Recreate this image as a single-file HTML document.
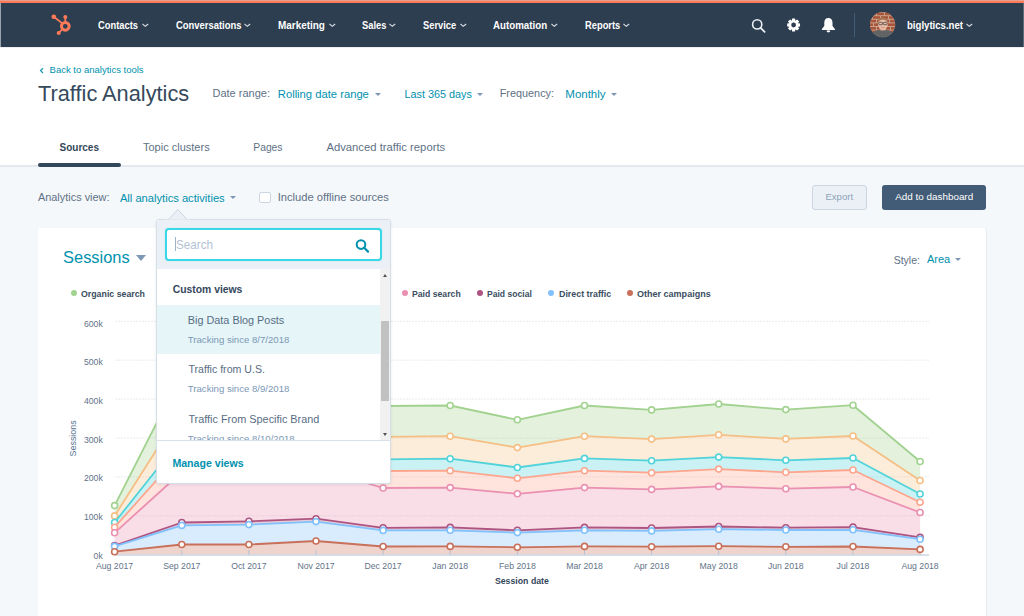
<!DOCTYPE html><html><head><meta charset="utf-8"><style>
*{margin:0;padding:0;box-sizing:border-box}
html,body{width:1024px;height:616px;overflow:hidden;background:#f5f8fa;font-family:"Liberation Sans",sans-serif}
.t{position:absolute;line-height:1;white-space:nowrap}
.abs{position:absolute}

</style></head><body>
<div class="abs" style="left:0;top:0;width:1024px;height:166px;background:#fff"></div>
<div class="abs" style="left:0;top:165px;width:1024px;height:2px;background:#e3e9ef"></div>
<div class="abs" style="left:0;top:47px;width:1024px;height:1px;background:#eceef0"></div>
<div class="abs" style="left:0;top:0;width:1024px;height:47px;background:#2d3e50"></div>
<div class="abs" style="left:0;top:0;width:1024px;height:3px;background:#ff7a59"></div>
<div class="abs" style="left:0;top:0;width:1024px;height:1px;background:#e2a08e"></div>
<div class="abs" style="left:0;top:3px;width:1px;height:44px;background:#9aa4ae"></div>
<div class="abs" style="left:1023px;top:3px;width:1px;height:44px;background:#5d6b78"></div>
<svg class="abs" style="left:48px;top:10px" width="30" height="30" viewBox="0 0 30 30">
<g fill="none" stroke="#ff7a59" stroke-linecap="round">
<circle cx="17.3" cy="16.3" r="3.85" stroke-width="3"/>
<line x1="5.8" y1="6.8" x2="14.3" y2="13.4" stroke-width="1.8"/>
<line x1="17.3" y1="7" x2="17.3" y2="12.4" stroke-width="1.8"/>
<line x1="10.7" y1="22.9" x2="14.5" y2="19.2" stroke-width="1.8"/>
</g>
<circle cx="5.8" cy="6.8" r="2.3" fill="#ff7a59"/><circle cx="17.3" cy="7" r="2" fill="#ff7a59"/><circle cx="10.7" cy="22.9" r="2" fill="#ff7a59"/>
</svg>
<div class="t" style="left:98px;top:20.73px;font-size:10px;font-weight:700;color:#fff;transform:scaleX(0.9346);transform-origin:0 0">Contacts</div>
<svg style="position:absolute;left:141.5px;top:23.0px" width="7" height="5"><polyline points="0.5,1 3.3,3.3 6.2,1" fill="none" stroke="#d5dbe2" stroke-width="1.1"/></svg>
<div class="t" style="left:175.5px;top:20.73px;font-size:10px;font-weight:700;color:#fff;transform:scaleX(0.9429);transform-origin:0 0">Conversations</div>
<svg style="position:absolute;left:244.39999999999998px;top:23.0px" width="7" height="5"><polyline points="0.5,1 3.3,3.3 6.2,1" fill="none" stroke="#d5dbe2" stroke-width="1.1"/></svg>
<div class="t" style="left:277.8px;top:20.73px;font-size:10px;font-weight:700;color:#fff;transform:scaleX(0.9929);transform-origin:0 0">Marketing</div>
<svg style="position:absolute;left:328.8px;top:23.0px" width="7" height="5"><polyline points="0.5,1 3.3,3.3 6.2,1" fill="none" stroke="#d5dbe2" stroke-width="1.1"/></svg>
<div class="t" style="left:361.8px;top:20.73px;font-size:10px;font-weight:700;color:#fff;transform:scaleX(0.9334);transform-origin:0 0">Sales</div>
<svg style="position:absolute;left:388.7px;top:23.0px" width="7" height="5"><polyline points="0.5,1 3.3,3.3 6.2,1" fill="none" stroke="#d5dbe2" stroke-width="1.1"/></svg>
<div class="t" style="left:422.9px;top:20.73px;font-size:10px;font-weight:700;color:#fff;transform:scaleX(0.9327);transform-origin:0 0">Service</div>
<svg style="position:absolute;left:459.59999999999997px;top:23.0px" width="7" height="5"><polyline points="0.5,1 3.3,3.3 6.2,1" fill="none" stroke="#d5dbe2" stroke-width="1.1"/></svg>
<div class="t" style="left:493.3px;top:20.73px;font-size:10px;font-weight:700;color:#fff;transform:scaleX(0.9740);transform-origin:0 0">Automation</div>
<svg style="position:absolute;left:551.1px;top:23.0px" width="7" height="5"><polyline points="0.5,1 3.3,3.3 6.2,1" fill="none" stroke="#d5dbe2" stroke-width="1.1"/></svg>
<div class="t" style="left:584.9px;top:20.73px;font-size:10px;font-weight:700;color:#fff;transform:scaleX(0.9339);transform-origin:0 0">Reports</div>
<svg style="position:absolute;left:623.3000000000001px;top:23.0px" width="7" height="5"><polyline points="0.5,1 3.3,3.3 6.2,1" fill="none" stroke="#d5dbe2" stroke-width="1.1"/></svg>
<svg class="abs" style="left:745px;top:12px" width="100" height="26" viewBox="745 12 100 26">
<circle cx="757.2" cy="24.4" r="4.6" fill="none" stroke="#eaf0f6" stroke-width="1.6"/>
<line x1="760.6" y1="27.8" x2="764.6" y2="31.8" stroke="#eaf0f6" stroke-width="1.8" stroke-linecap="round"/>
<g transform="translate(793.6,25)" fill="#fff"><path d="M-1.88,-4.53 L-1.68,-4.60 L-1.48,-6.43 L1.48,-6.43 L1.68,-4.60 L1.88,-4.53 L2.07,-4.44 L3.50,-5.60 L5.60,-3.50 L4.44,-2.07 L4.53,-1.88 L4.60,-1.68 L6.43,-1.48 L6.43,1.48 L4.60,1.68 L4.53,1.88 L4.44,2.07 L5.60,3.50 L3.50,5.60 L2.07,4.44 L1.88,4.53 L1.68,4.60 L1.48,6.43 L-1.48,6.43 L-1.68,4.60 L-1.88,4.53 L-2.07,4.44 L-3.50,5.60 L-5.60,3.50 L-4.44,2.07 L-4.53,1.88 L-4.60,1.68 L-6.43,1.48 L-6.43,-1.48 L-4.60,-1.68 L-4.53,-1.88 L-4.44,-2.07 L-5.60,-3.50 L-3.50,-5.60 L-2.07,-4.44 Z M2.4,0 A2.4,2.4 0 1,0 -2.4,0 A2.4,2.4 0 1,0 2.4,0 Z" fill-rule="evenodd"/></g>
<path d="M828.4,17.9 c-2.6,0 -4.1,1.9 -4.1,4.6 v3.5 l-2.4,3.1 v0.8 h13 v-0.8 l-2.4,-3.1 v-3.5 c0,-2.7 -1.5,-4.6 -4.1,-4.6 z" fill="#fff"/>
<ellipse cx="828.4" cy="31.3" rx="1.8" ry="1.1" fill="#fff"/>
</svg>
<div class="abs" style="left:854px;top:13px;width:1px;height:24px;background:#425b76"></div>
<svg class="abs" style="left:870px;top:12px" width="26" height="26" viewBox="0 0 26 26">
<defs><clipPath id="av"><circle cx="12.6" cy="12.6" r="12.6"/></clipPath></defs>
<g clip-path="url(#av)">
<rect width="26" height="26" fill="#c9a28c"/>
<g fill="#a8543a"><rect x="0" y="0.6" width="6" height="2.6"/><rect x="7" y="0.6" width="7" height="2.6"/><rect x="15" y="0.6" width="7" height="2.6"/><rect x="23" y="0.6" width="3" height="2.6"/>
<rect x="3" y="4.2" width="7" height="2.6"/><rect x="11" y="4.2" width="7" height="2.6"/><rect x="19" y="4.2" width="7" height="2.6"/>
<rect x="0" y="7.8" width="6" height="2.6"/><rect x="7" y="7.8" width="5" height="2.6"/><rect x="16" y="7.8" width="3" height="2.6"/><rect x="20" y="7.8" width="6" height="2.6"/>
<rect x="0" y="11.4" width="3" height="2.6"/><rect x="4" y="11.4" width="6" height="2.6"/><rect x="17" y="11.4" width="9" height="2.6"/>
<rect x="0" y="15" width="6" height="2.6"/><rect x="7" y="15" width="4" height="2.6"/><rect x="16" y="15" width="4" height="2.6"/><rect x="21" y="15" width="5" height="2.6"/>
<rect x="2" y="18.6" width="6" height="2.6"/><rect x="19" y="18.6" width="7" height="2.6"/></g>
<path d="M0,26 q2,-7.5 8.5,-8 h8.5 q6,0.5 9,8z" fill="#616365"/>
<rect x="10.4" y="15.5" width="5" height="3" fill="#dba48f"/>
<ellipse cx="12.9" cy="12.2" rx="4.9" ry="5.7" fill="#e9bba6"/>
<path d="M8,10.2 q0.2,-4.8 4.9,-5 q4.7,0.2 4.9,5 q-1.6,-2.6 -4.9,-2.6 q-3.3,0 -4.9,2.6z" fill="#a47650"/>
<rect x="8.7" y="10.3" width="3.8" height="2.4" rx="0.8" fill="none" stroke="#3a3a3a" stroke-width="0.7"/>
<rect x="13.3" y="10.3" width="3.8" height="2.4" rx="0.8" fill="none" stroke="#3a3a3a" stroke-width="0.7"/>
<path d="M11,15.2 q1.9,1 3.8,0" fill="none" stroke="#b07a6a" stroke-width="0.5"/>
</g></svg>
<div class="t" style="left:907px;top:20.73px;font-size:10px;font-weight:700;color:#fff;transform:scaleX(0.9596);transform-origin:0 0">biglytics.net</div>
<svg style="position:absolute;left:966.2px;top:23.0px" width="7" height="5"><polyline points="0.5,1 3.3,3.3 6.2,1" fill="none" stroke="#d5dbe2" stroke-width="1.1"/></svg>
<svg class="abs" style="left:39px;top:67px" width="6" height="8"><polyline points="3.9,1.2 1.6,3.6 3.9,6" fill="none" stroke="#1c9ab5" stroke-width="1.3"/></svg>
<div class="t" style="left:49.6px;top:64.86px;font-size:9.5px;font-weight:400;color:#0091ae;">Back to analytics tools</div>
<div class="t" style="left:38.3px;top:82.84px;font-size:22.4px;font-weight:400;color:#36495d;transform:scaleX(0.9721);transform-origin:0 0">Traffic Analytics</div>
<div class="t" style="left:212.5px;top:87.89px;font-size:11px;font-weight:400;color:#5e7186;">Date range:</div>
<div class="t" style="left:277.8px;top:88.79px;font-size:11.23px;font-weight:400;color:#0091ae;">Rolling date range</div>
<div style="position:absolute;left:374.7px;top:92.8px;width:0;height:0;border-left:3.0px solid transparent;border-right:3.0px solid transparent;border-top:3.5px solid #7c98b6"></div>
<div class="t" style="left:404.5px;top:89.13px;font-size:10.83px;font-weight:400;color:#0091ae;">Last 365 days</div>
<div style="position:absolute;left:477px;top:92.8px;width:0;height:0;border-left:3.0px solid transparent;border-right:3.0px solid transparent;border-top:3.5px solid #7c98b6"></div>
<div class="t" style="left:499.7px;top:88.01px;font-size:10.86px;font-weight:400;color:#5e7186;">Frequency:</div>
<div class="t" style="left:565.3px;top:88.67px;font-size:11.5px;font-weight:400;color:#0091ae;">Monthly</div>
<div style="position:absolute;left:611.2px;top:92.8px;width:0;height:0;border-left:3.0px solid transparent;border-right:3.0px solid transparent;border-top:3.5px solid #7c98b6"></div>
<div class="t" style="left:59.5px;top:142.53px;font-size:10px;font-weight:700;color:#33475b;">Sources</div>
<div class="t" style="left:143px;top:141.69px;font-size:11px;font-weight:400;color:#5e7186;">Topic clusters</div>
<div class="t" style="left:253.3px;top:142.88px;font-size:10.3px;font-weight:400;color:#5e7186;">Pages</div>
<div class="t" style="left:326.4px;top:142.06px;font-size:11.27px;font-weight:400;color:#5e7186;">Advanced traffic reports</div>
<div class="abs" style="left:38px;top:163px;width:83px;height:4px;border-radius:2px;background:#33475b"></div>
<div class="t" style="left:37.9px;top:192.05px;font-size:10.93px;font-weight:400;color:#5e7186;">Analytics view:</div>
<div class="t" style="left:119.9px;top:192.55px;font-size:11.16px;font-weight:400;color:#0091ae;">All analytics activities</div>
<div style="position:absolute;left:229.5px;top:195.6px;width:0;height:0;border-left:3.1px solid transparent;border-right:3.1px solid transparent;border-top:3.6px solid #7c98b6"></div>
<div class="abs" style="left:259px;top:192px;width:12px;height:11px;border:1px solid #cbd6e2;border-radius:2px;background:#fff"></div>
<div class="t" style="left:277.7px;top:191.82px;font-size:11.2px;font-weight:400;color:#5e7186;">Include offline sources</div>
<div class="abs" style="left:812px;top:185px;width:55px;height:25px;border:1px solid #cbd6e2;border-radius:3px;background:#eaf0f6"></div>
<div class="t" style="left:825.4px;top:192.37px;font-size:9.6px;font-weight:400;color:#8fa3b9;">Export</div>
<div class="abs" style="left:882px;top:185px;width:104px;height:25px;border-radius:3px;background:#425b76"></div>
<div class="t" style="left:895.3px;top:192.15px;font-size:9.87px;font-weight:400;color:#fff;">Add to dashboard</div>
<div class="abs" style="left:38px;top:228px;width:948px;height:400px;background:#fff;border-radius:3px;box-shadow:1px 0 0 #e8ecf0"></div>
<div class="t" style="left:63.1px;top:249.12px;font-size:16.4px;font-weight:400;color:#0091ae;">Sessions</div>
<div style="position:absolute;left:135.5px;top:255px;width:0;height:0;border-left:5.0px solid transparent;border-right:5.0px solid transparent;border-top:6px solid #7c98b6"></div>
<div class="t" style="left:893.7px;top:254.71px;font-size:10.5px;font-weight:400;color:#5e7186;">Style:</div>
<div class="t" style="left:926.9px;top:254.29px;font-size:11px;font-weight:400;color:#0091ae;">Area</div>
<div style="position:absolute;left:955px;top:258px;width:0;height:0;border-left:3.0px solid transparent;border-right:3.0px solid transparent;border-top:3px solid #7c98b6"></div>
<div class="abs" style="left:70.8px;top:290.2px;width:6px;height:6px;border-radius:50%;background:#a2d28f"></div>
<div class="t" style="left:81.3px;top:289.71px;font-size:9.2px;font-weight:700;color:#3a4d61;transform:scaleX(0.9566);transform-origin:0 0">Organic search</div>
<div class="abs" style="left:402px;top:290.2px;width:6px;height:6px;border-radius:50%;background:#ea90b1"></div>
<div class="t" style="left:412.4px;top:289.71px;font-size:9.2px;font-weight:700;color:#3a4d61;transform:scaleX(0.9439);transform-origin:0 0">Paid search</div>
<div class="abs" style="left:476.6px;top:290.2px;width:6px;height:6px;border-radius:50%;background:#ad5580"></div>
<div class="t" style="left:487.2px;top:289.71px;font-size:9.2px;font-weight:700;color:#3a4d61;transform:scaleX(0.9330);transform-origin:0 0">Paid social</div>
<div class="abs" style="left:547.9px;top:290.2px;width:6px;height:6px;border-radius:50%;background:#81c1fd"></div>
<div class="t" style="left:558.5px;top:289.71px;font-size:9.2px;font-weight:700;color:#3a4d61;transform:scaleX(0.9644);transform-origin:0 0">Direct traffic</div>
<div class="abs" style="left:626.6px;top:290.2px;width:6px;height:6px;border-radius:50%;background:#c8705a"></div>
<div class="t" style="left:637.2px;top:289.71px;font-size:9.2px;font-weight:700;color:#3a4d61;transform:scaleX(0.9818);transform-origin:0 0">Other campaigns</div>
<svg width="1024" height="616" style="position:absolute;left:0;top:0">
<line x1="115" y1="515.8" x2="929" y2="515.8" stroke="#e8ecf1" stroke-width="1" stroke-dasharray="2,1"/>
<line x1="115" y1="476.9" x2="929" y2="476.9" stroke="#e8ecf1" stroke-width="1" stroke-dasharray="2,1"/>
<line x1="115" y1="438.0" x2="929" y2="438.0" stroke="#e8ecf1" stroke-width="1" stroke-dasharray="2,1"/>
<line x1="115" y1="399.1" x2="929" y2="399.1" stroke="#e8ecf1" stroke-width="1" stroke-dasharray="2,1"/>
<line x1="115" y1="360.2" x2="929" y2="360.2" stroke="#e8ecf1" stroke-width="1" stroke-dasharray="2,1"/>
<line x1="115" y1="321.3" x2="929" y2="321.3" stroke="#e8ecf1" stroke-width="1" stroke-dasharray="2,1"/>
<polygon points="114.6,551.7 181.8,544.5 248.9,544.5 316.0,541.0 383.1,546.5 450.2,546.4 517.4,547.3 584.5,546.4 651.6,546.7 718.7,546.2 785.8,546.8 853.0,546.5 920.1,549.4 920.1,554.7 853.0,554.7 785.8,554.7 718.7,554.7 651.6,554.7 584.5,554.7 517.4,554.7 450.2,554.7 383.1,554.7 316.0,554.7 248.9,554.7 181.8,554.7 114.6,554.7" fill="#c8705a" fill-opacity="0.3" stroke="none"/>
<polygon points="114.6,546.4 181.8,525.4 248.9,524.6 316.0,521.6 383.1,530.4 450.2,530.3 517.4,532.6 584.5,530.3 651.6,530.9 718.7,529.2 785.8,530.0 853.0,529.8 920.1,539.2 920.1,549.4 853.0,546.5 785.8,546.8 718.7,546.2 651.6,546.7 584.5,546.4 517.4,547.3 450.2,546.4 383.1,546.5 316.0,541.0 248.9,544.5 181.8,544.5 114.6,551.7" fill="#81c1fd" fill-opacity="0.3" stroke="none"/>
<polygon points="114.6,545.6 181.8,522.5 248.9,521.3 316.0,518.7 383.1,527.8 450.2,527.4 517.4,530.3 584.5,527.4 651.6,528.0 718.7,526.5 785.8,527.7 853.0,527.1 920.1,537.4 920.1,539.2 853.0,529.8 785.8,530.0 718.7,529.2 651.6,530.9 584.5,530.3 517.4,532.6 450.2,530.3 383.1,530.4 316.0,521.6 248.9,524.6 181.8,525.4 114.6,546.4" fill="#ad5580" fill-opacity="0.3" stroke="none"/>
<polygon points="114.6,532.8 181.8,472.0 248.9,470.0 316.0,468.0 383.1,488.0 450.2,487.6 517.4,493.8 584.5,487.6 651.6,489.4 718.7,486.4 785.8,488.7 853.0,487.0 920.1,512.5 920.1,537.4 853.0,527.1 785.8,527.7 718.7,526.5 651.6,528.0 584.5,527.4 517.4,530.3 450.2,527.4 383.1,527.8 316.0,518.7 248.9,521.3 181.8,522.5 114.6,545.6" fill="#ea90b1" fill-opacity="0.3" stroke="none"/>
<polygon points="114.6,527.2 181.8,452.0 248.9,451.0 316.0,449.0 383.1,471.0 450.2,470.7 517.4,478.3 584.5,470.7 651.6,472.7 718.7,469.1 785.8,472.3 853.0,470.0 920.1,502.2 920.1,512.5 853.0,487.0 785.8,488.7 718.7,486.4 651.6,489.4 584.5,487.6 517.4,493.8 450.2,487.6 383.1,488.0 316.0,468.0 248.9,470.0 181.8,472.0 114.6,532.8" fill="#fea58e" fill-opacity="0.3" stroke="none"/>
<polygon points="114.6,522.5 181.8,438.0 248.9,437.0 316.0,435.0 383.1,459.3 450.2,458.7 517.4,467.5 584.5,458.4 651.6,460.7 718.7,457.1 785.8,460.3 853.0,458.0 920.1,494.0 920.1,502.2 853.0,470.0 785.8,472.3 718.7,469.1 651.6,472.7 584.5,470.7 517.4,478.3 450.2,470.7 383.1,471.0 316.0,449.0 248.9,451.0 181.8,452.0 114.6,527.2" fill="#51d3d9" fill-opacity="0.3" stroke="none"/>
<polygon points="114.6,515.9 181.8,410.0 248.9,409.0 316.0,407.0 383.1,436.8 450.2,436.2 517.4,447.6 584.5,436.2 651.6,439.1 718.7,434.8 785.8,438.9 853.0,436.0 920.1,480.5 920.1,494.0 853.0,458.0 785.8,460.3 718.7,457.1 651.6,460.7 584.5,458.4 517.4,467.5 450.2,458.7 383.1,459.3 316.0,435.0 248.9,437.0 181.8,438.0 114.6,522.5" fill="#f5bf85" fill-opacity="0.3" stroke="none"/>
<polygon points="114.6,505.6 181.8,373.5 248.9,371.0 316.0,369.0 383.1,406.0 450.2,405.5 517.4,419.8 584.5,405.5 651.6,409.9 718.7,404.0 785.8,409.6 853.0,405.2 920.1,461.5 920.1,480.5 853.0,436.0 785.8,438.9 718.7,434.8 651.6,439.1 584.5,436.2 517.4,447.6 450.2,436.2 383.1,436.8 316.0,407.0 248.9,409.0 181.8,410.0 114.6,515.9" fill="#a2d28f" fill-opacity="0.3" stroke="none"/>
<line x1="115" y1="555" x2="929" y2="555" stroke="#cbd6e2" stroke-width="1.5"/>
<line x1="114.6" y1="550" x2="114.6" y2="555" stroke="#b6c3d1" stroke-width="1"/>
<line x1="181.8" y1="550" x2="181.8" y2="555" stroke="#b6c3d1" stroke-width="1"/>
<line x1="248.9" y1="550" x2="248.9" y2="555" stroke="#b6c3d1" stroke-width="1"/>
<line x1="316.0" y1="550" x2="316.0" y2="555" stroke="#b6c3d1" stroke-width="1"/>
<line x1="383.1" y1="550" x2="383.1" y2="555" stroke="#b6c3d1" stroke-width="1"/>
<line x1="450.2" y1="550" x2="450.2" y2="555" stroke="#b6c3d1" stroke-width="1"/>
<line x1="517.4" y1="550" x2="517.4" y2="555" stroke="#b6c3d1" stroke-width="1"/>
<line x1="584.5" y1="550" x2="584.5" y2="555" stroke="#b6c3d1" stroke-width="1"/>
<line x1="651.6" y1="550" x2="651.6" y2="555" stroke="#b6c3d1" stroke-width="1"/>
<line x1="718.7" y1="550" x2="718.7" y2="555" stroke="#b6c3d1" stroke-width="1"/>
<line x1="785.8" y1="550" x2="785.8" y2="555" stroke="#b6c3d1" stroke-width="1"/>
<line x1="853.0" y1="550" x2="853.0" y2="555" stroke="#b6c3d1" stroke-width="1"/>
<line x1="920.1" y1="550" x2="920.1" y2="555" stroke="#b6c3d1" stroke-width="1"/>
<polyline points="114.6,505.6 181.8,373.5 248.9,371.0 316.0,369.0 383.1,406.0 450.2,405.5 517.4,419.8 584.5,405.5 651.6,409.9 718.7,404.0 785.8,409.6 853.0,405.2 920.1,461.5" fill="none" stroke="#a2d28f" stroke-width="1.8" stroke-linejoin="round"/>
<circle cx="114.6" cy="505.6" r="3" fill="#fff" stroke="#a2d28f" stroke-width="1.6"/>
<circle cx="181.8" cy="373.5" r="3" fill="#fff" stroke="#a2d28f" stroke-width="1.6"/>
<circle cx="248.9" cy="371.0" r="3" fill="#fff" stroke="#a2d28f" stroke-width="1.6"/>
<circle cx="316.0" cy="369.0" r="3" fill="#fff" stroke="#a2d28f" stroke-width="1.6"/>
<circle cx="383.1" cy="406.0" r="3" fill="#fff" stroke="#a2d28f" stroke-width="1.6"/>
<circle cx="450.2" cy="405.5" r="3" fill="#fff" stroke="#a2d28f" stroke-width="1.6"/>
<circle cx="517.4" cy="419.8" r="3" fill="#fff" stroke="#a2d28f" stroke-width="1.6"/>
<circle cx="584.5" cy="405.5" r="3" fill="#fff" stroke="#a2d28f" stroke-width="1.6"/>
<circle cx="651.6" cy="409.9" r="3" fill="#fff" stroke="#a2d28f" stroke-width="1.6"/>
<circle cx="718.7" cy="404.0" r="3" fill="#fff" stroke="#a2d28f" stroke-width="1.6"/>
<circle cx="785.8" cy="409.6" r="3" fill="#fff" stroke="#a2d28f" stroke-width="1.6"/>
<circle cx="853.0" cy="405.2" r="3" fill="#fff" stroke="#a2d28f" stroke-width="1.6"/>
<circle cx="920.1" cy="461.5" r="3" fill="#fff" stroke="#a2d28f" stroke-width="1.6"/>
<polyline points="114.6,515.9 181.8,410.0 248.9,409.0 316.0,407.0 383.1,436.8 450.2,436.2 517.4,447.6 584.5,436.2 651.6,439.1 718.7,434.8 785.8,438.9 853.0,436.0 920.1,480.5" fill="none" stroke="#f5bf85" stroke-width="1.8" stroke-linejoin="round"/>
<circle cx="114.6" cy="515.9" r="3" fill="#fff" stroke="#f5bf85" stroke-width="1.6"/>
<circle cx="181.8" cy="410.0" r="3" fill="#fff" stroke="#f5bf85" stroke-width="1.6"/>
<circle cx="248.9" cy="409.0" r="3" fill="#fff" stroke="#f5bf85" stroke-width="1.6"/>
<circle cx="316.0" cy="407.0" r="3" fill="#fff" stroke="#f5bf85" stroke-width="1.6"/>
<circle cx="383.1" cy="436.8" r="3" fill="#fff" stroke="#f5bf85" stroke-width="1.6"/>
<circle cx="450.2" cy="436.2" r="3" fill="#fff" stroke="#f5bf85" stroke-width="1.6"/>
<circle cx="517.4" cy="447.6" r="3" fill="#fff" stroke="#f5bf85" stroke-width="1.6"/>
<circle cx="584.5" cy="436.2" r="3" fill="#fff" stroke="#f5bf85" stroke-width="1.6"/>
<circle cx="651.6" cy="439.1" r="3" fill="#fff" stroke="#f5bf85" stroke-width="1.6"/>
<circle cx="718.7" cy="434.8" r="3" fill="#fff" stroke="#f5bf85" stroke-width="1.6"/>
<circle cx="785.8" cy="438.9" r="3" fill="#fff" stroke="#f5bf85" stroke-width="1.6"/>
<circle cx="853.0" cy="436.0" r="3" fill="#fff" stroke="#f5bf85" stroke-width="1.6"/>
<circle cx="920.1" cy="480.5" r="3" fill="#fff" stroke="#f5bf85" stroke-width="1.6"/>
<polyline points="114.6,522.5 181.8,438.0 248.9,437.0 316.0,435.0 383.1,459.3 450.2,458.7 517.4,467.5 584.5,458.4 651.6,460.7 718.7,457.1 785.8,460.3 853.0,458.0 920.1,494.0" fill="none" stroke="#51d3d9" stroke-width="1.8" stroke-linejoin="round"/>
<circle cx="114.6" cy="522.5" r="3" fill="#fff" stroke="#51d3d9" stroke-width="1.6"/>
<circle cx="181.8" cy="438.0" r="3" fill="#fff" stroke="#51d3d9" stroke-width="1.6"/>
<circle cx="248.9" cy="437.0" r="3" fill="#fff" stroke="#51d3d9" stroke-width="1.6"/>
<circle cx="316.0" cy="435.0" r="3" fill="#fff" stroke="#51d3d9" stroke-width="1.6"/>
<circle cx="383.1" cy="459.3" r="3" fill="#fff" stroke="#51d3d9" stroke-width="1.6"/>
<circle cx="450.2" cy="458.7" r="3" fill="#fff" stroke="#51d3d9" stroke-width="1.6"/>
<circle cx="517.4" cy="467.5" r="3" fill="#fff" stroke="#51d3d9" stroke-width="1.6"/>
<circle cx="584.5" cy="458.4" r="3" fill="#fff" stroke="#51d3d9" stroke-width="1.6"/>
<circle cx="651.6" cy="460.7" r="3" fill="#fff" stroke="#51d3d9" stroke-width="1.6"/>
<circle cx="718.7" cy="457.1" r="3" fill="#fff" stroke="#51d3d9" stroke-width="1.6"/>
<circle cx="785.8" cy="460.3" r="3" fill="#fff" stroke="#51d3d9" stroke-width="1.6"/>
<circle cx="853.0" cy="458.0" r="3" fill="#fff" stroke="#51d3d9" stroke-width="1.6"/>
<circle cx="920.1" cy="494.0" r="3" fill="#fff" stroke="#51d3d9" stroke-width="1.6"/>
<polyline points="114.6,527.2 181.8,452.0 248.9,451.0 316.0,449.0 383.1,471.0 450.2,470.7 517.4,478.3 584.5,470.7 651.6,472.7 718.7,469.1 785.8,472.3 853.0,470.0 920.1,502.2" fill="none" stroke="#fea58e" stroke-width="1.8" stroke-linejoin="round"/>
<circle cx="114.6" cy="527.2" r="3" fill="#fff" stroke="#fea58e" stroke-width="1.6"/>
<circle cx="181.8" cy="452.0" r="3" fill="#fff" stroke="#fea58e" stroke-width="1.6"/>
<circle cx="248.9" cy="451.0" r="3" fill="#fff" stroke="#fea58e" stroke-width="1.6"/>
<circle cx="316.0" cy="449.0" r="3" fill="#fff" stroke="#fea58e" stroke-width="1.6"/>
<circle cx="383.1" cy="471.0" r="3" fill="#fff" stroke="#fea58e" stroke-width="1.6"/>
<circle cx="450.2" cy="470.7" r="3" fill="#fff" stroke="#fea58e" stroke-width="1.6"/>
<circle cx="517.4" cy="478.3" r="3" fill="#fff" stroke="#fea58e" stroke-width="1.6"/>
<circle cx="584.5" cy="470.7" r="3" fill="#fff" stroke="#fea58e" stroke-width="1.6"/>
<circle cx="651.6" cy="472.7" r="3" fill="#fff" stroke="#fea58e" stroke-width="1.6"/>
<circle cx="718.7" cy="469.1" r="3" fill="#fff" stroke="#fea58e" stroke-width="1.6"/>
<circle cx="785.8" cy="472.3" r="3" fill="#fff" stroke="#fea58e" stroke-width="1.6"/>
<circle cx="853.0" cy="470.0" r="3" fill="#fff" stroke="#fea58e" stroke-width="1.6"/>
<circle cx="920.1" cy="502.2" r="3" fill="#fff" stroke="#fea58e" stroke-width="1.6"/>
<polyline points="114.6,532.8 181.8,472.0 248.9,470.0 316.0,468.0 383.1,488.0 450.2,487.6 517.4,493.8 584.5,487.6 651.6,489.4 718.7,486.4 785.8,488.7 853.0,487.0 920.1,512.5" fill="none" stroke="#ea90b1" stroke-width="1.8" stroke-linejoin="round"/>
<circle cx="114.6" cy="532.8" r="3" fill="#fff" stroke="#ea90b1" stroke-width="1.6"/>
<circle cx="181.8" cy="472.0" r="3" fill="#fff" stroke="#ea90b1" stroke-width="1.6"/>
<circle cx="248.9" cy="470.0" r="3" fill="#fff" stroke="#ea90b1" stroke-width="1.6"/>
<circle cx="316.0" cy="468.0" r="3" fill="#fff" stroke="#ea90b1" stroke-width="1.6"/>
<circle cx="383.1" cy="488.0" r="3" fill="#fff" stroke="#ea90b1" stroke-width="1.6"/>
<circle cx="450.2" cy="487.6" r="3" fill="#fff" stroke="#ea90b1" stroke-width="1.6"/>
<circle cx="517.4" cy="493.8" r="3" fill="#fff" stroke="#ea90b1" stroke-width="1.6"/>
<circle cx="584.5" cy="487.6" r="3" fill="#fff" stroke="#ea90b1" stroke-width="1.6"/>
<circle cx="651.6" cy="489.4" r="3" fill="#fff" stroke="#ea90b1" stroke-width="1.6"/>
<circle cx="718.7" cy="486.4" r="3" fill="#fff" stroke="#ea90b1" stroke-width="1.6"/>
<circle cx="785.8" cy="488.7" r="3" fill="#fff" stroke="#ea90b1" stroke-width="1.6"/>
<circle cx="853.0" cy="487.0" r="3" fill="#fff" stroke="#ea90b1" stroke-width="1.6"/>
<circle cx="920.1" cy="512.5" r="3" fill="#fff" stroke="#ea90b1" stroke-width="1.6"/>
<polyline points="114.6,545.6 181.8,522.5 248.9,521.3 316.0,518.7 383.1,527.8 450.2,527.4 517.4,530.3 584.5,527.4 651.6,528.0 718.7,526.5 785.8,527.7 853.0,527.1 920.1,537.4" fill="none" stroke="#ad5580" stroke-width="1.8" stroke-linejoin="round"/>
<circle cx="114.6" cy="545.6" r="3" fill="#fff" stroke="#ad5580" stroke-width="1.6"/>
<circle cx="181.8" cy="522.5" r="3" fill="#fff" stroke="#ad5580" stroke-width="1.6"/>
<circle cx="248.9" cy="521.3" r="3" fill="#fff" stroke="#ad5580" stroke-width="1.6"/>
<circle cx="316.0" cy="518.7" r="3" fill="#fff" stroke="#ad5580" stroke-width="1.6"/>
<circle cx="383.1" cy="527.8" r="3" fill="#fff" stroke="#ad5580" stroke-width="1.6"/>
<circle cx="450.2" cy="527.4" r="3" fill="#fff" stroke="#ad5580" stroke-width="1.6"/>
<circle cx="517.4" cy="530.3" r="3" fill="#fff" stroke="#ad5580" stroke-width="1.6"/>
<circle cx="584.5" cy="527.4" r="3" fill="#fff" stroke="#ad5580" stroke-width="1.6"/>
<circle cx="651.6" cy="528.0" r="3" fill="#fff" stroke="#ad5580" stroke-width="1.6"/>
<circle cx="718.7" cy="526.5" r="3" fill="#fff" stroke="#ad5580" stroke-width="1.6"/>
<circle cx="785.8" cy="527.7" r="3" fill="#fff" stroke="#ad5580" stroke-width="1.6"/>
<circle cx="853.0" cy="527.1" r="3" fill="#fff" stroke="#ad5580" stroke-width="1.6"/>
<circle cx="920.1" cy="537.4" r="3" fill="#fff" stroke="#ad5580" stroke-width="1.6"/>
<polyline points="114.6,546.4 181.8,525.4 248.9,524.6 316.0,521.6 383.1,530.4 450.2,530.3 517.4,532.6 584.5,530.3 651.6,530.9 718.7,529.2 785.8,530.0 853.0,529.8 920.1,539.2" fill="none" stroke="#81c1fd" stroke-width="1.8" stroke-linejoin="round"/>
<circle cx="114.6" cy="546.4" r="3" fill="#fff" stroke="#81c1fd" stroke-width="1.6"/>
<circle cx="181.8" cy="525.4" r="3" fill="#fff" stroke="#81c1fd" stroke-width="1.6"/>
<circle cx="248.9" cy="524.6" r="3" fill="#fff" stroke="#81c1fd" stroke-width="1.6"/>
<circle cx="316.0" cy="521.6" r="3" fill="#fff" stroke="#81c1fd" stroke-width="1.6"/>
<circle cx="383.1" cy="530.4" r="3" fill="#fff" stroke="#81c1fd" stroke-width="1.6"/>
<circle cx="450.2" cy="530.3" r="3" fill="#fff" stroke="#81c1fd" stroke-width="1.6"/>
<circle cx="517.4" cy="532.6" r="3" fill="#fff" stroke="#81c1fd" stroke-width="1.6"/>
<circle cx="584.5" cy="530.3" r="3" fill="#fff" stroke="#81c1fd" stroke-width="1.6"/>
<circle cx="651.6" cy="530.9" r="3" fill="#fff" stroke="#81c1fd" stroke-width="1.6"/>
<circle cx="718.7" cy="529.2" r="3" fill="#fff" stroke="#81c1fd" stroke-width="1.6"/>
<circle cx="785.8" cy="530.0" r="3" fill="#fff" stroke="#81c1fd" stroke-width="1.6"/>
<circle cx="853.0" cy="529.8" r="3" fill="#fff" stroke="#81c1fd" stroke-width="1.6"/>
<circle cx="920.1" cy="539.2" r="3" fill="#fff" stroke="#81c1fd" stroke-width="1.6"/>
<polyline points="114.6,551.7 181.8,544.5 248.9,544.5 316.0,541.0 383.1,546.5 450.2,546.4 517.4,547.3 584.5,546.4 651.6,546.7 718.7,546.2 785.8,546.8 853.0,546.5 920.1,549.4" fill="none" stroke="#c8705a" stroke-width="1.8" stroke-linejoin="round"/>
<circle cx="114.6" cy="551.7" r="3" fill="#fff" stroke="#c8705a" stroke-width="1.6"/>
<circle cx="181.8" cy="544.5" r="3" fill="#fff" stroke="#c8705a" stroke-width="1.6"/>
<circle cx="248.9" cy="544.5" r="3" fill="#fff" stroke="#c8705a" stroke-width="1.6"/>
<circle cx="316.0" cy="541.0" r="3" fill="#fff" stroke="#c8705a" stroke-width="1.6"/>
<circle cx="383.1" cy="546.5" r="3" fill="#fff" stroke="#c8705a" stroke-width="1.6"/>
<circle cx="450.2" cy="546.4" r="3" fill="#fff" stroke="#c8705a" stroke-width="1.6"/>
<circle cx="517.4" cy="547.3" r="3" fill="#fff" stroke="#c8705a" stroke-width="1.6"/>
<circle cx="584.5" cy="546.4" r="3" fill="#fff" stroke="#c8705a" stroke-width="1.6"/>
<circle cx="651.6" cy="546.7" r="3" fill="#fff" stroke="#c8705a" stroke-width="1.6"/>
<circle cx="718.7" cy="546.2" r="3" fill="#fff" stroke="#c8705a" stroke-width="1.6"/>
<circle cx="785.8" cy="546.8" r="3" fill="#fff" stroke="#c8705a" stroke-width="1.6"/>
<circle cx="853.0" cy="546.5" r="3" fill="#fff" stroke="#c8705a" stroke-width="1.6"/>
<circle cx="920.1" cy="549.4" r="3" fill="#fff" stroke="#c8705a" stroke-width="1.6"/>
</svg>
<div class="t" style="left:0;width:102.8px;text-align:right;top:551.74px;font-size:8.7px;color:#5f7388">0k</div>
<div class="t" style="left:0;width:102.8px;text-align:right;top:513.00px;font-size:8.7px;color:#5f7388">100k</div>
<div class="t" style="left:0;width:102.8px;text-align:right;top:474.27px;font-size:8.7px;color:#5f7388">200k</div>
<div class="t" style="left:0;width:102.8px;text-align:right;top:435.54px;font-size:8.7px;color:#5f7388">300k</div>
<div class="t" style="left:0;width:102.8px;text-align:right;top:396.80px;font-size:8.7px;color:#5f7388">400k</div>
<div class="t" style="left:0;width:102.8px;text-align:right;top:358.07px;font-size:8.7px;color:#5f7388">500k</div>
<div class="t" style="left:0;width:102.8px;text-align:right;top:320.04px;font-size:8.7px;color:#5f7388">600k</div>
<div class="t" style="left:74.6px;width:80px;text-align:center;top:562.34px;font-size:8.7px;color:#5f7388">Aug 2017</div>
<div class="t" style="left:141.8px;width:80px;text-align:center;top:562.34px;font-size:8.7px;color:#5f7388">Sep 2017</div>
<div class="t" style="left:208.9px;width:80px;text-align:center;top:562.34px;font-size:8.7px;color:#5f7388">Oct 2017</div>
<div class="t" style="left:276.0px;width:80px;text-align:center;top:562.34px;font-size:8.7px;color:#5f7388">Nov 2017</div>
<div class="t" style="left:343.1px;width:80px;text-align:center;top:562.34px;font-size:8.7px;color:#5f7388">Dec 2017</div>
<div class="t" style="left:410.2px;width:80px;text-align:center;top:562.34px;font-size:8.7px;color:#5f7388">Jan 2018</div>
<div class="t" style="left:477.4px;width:80px;text-align:center;top:562.34px;font-size:8.7px;color:#5f7388">Feb 2018</div>
<div class="t" style="left:544.5px;width:80px;text-align:center;top:562.34px;font-size:8.7px;color:#5f7388">Mar 2018</div>
<div class="t" style="left:611.6px;width:80px;text-align:center;top:562.34px;font-size:8.7px;color:#5f7388">Apr 2018</div>
<div class="t" style="left:678.7px;width:80px;text-align:center;top:562.34px;font-size:8.7px;color:#5f7388">May 2018</div>
<div class="t" style="left:745.8px;width:80px;text-align:center;top:562.34px;font-size:8.7px;color:#5f7388">Jun 2018</div>
<div class="t" style="left:813.0px;width:80px;text-align:center;top:562.34px;font-size:8.7px;color:#5f7388">Jul 2018</div>
<div class="t" style="left:880.1px;width:80px;text-align:center;top:562.34px;font-size:8.7px;color:#5f7388">Aug 2018</div>
<div class="t" style="left:481.9px;width:80px;text-align:center;top:576.69px;font-size:8.75px;font-weight:700;color:#33475b">Session date</div>
<div class="t" style="left:42.7px;width:60px;text-align:center;top:434.1px;font-size:8.9px;color:#516f90;transform:rotate(-90deg);transform-origin:30px 4.4px">Sessions</div>
<div class="abs" style="left:156px;top:219px;width:235px;height:265px;background:#fff;border:1px solid #d6dfe8;border-radius:3px;box-shadow:0 1px 3px rgba(45,62,80,0.10);overflow:hidden">
<div class="abs" style="left:0;top:0;width:233px;height:49.2px;background:#eaf0f6"></div>
<div class="abs" style="left:7.8px;top:7.6px;width:217px;height:33.2px;background:#fff;border:2.2px solid #3ad8e7;border-radius:4px;box-shadow:0 0 1px #7fe6ef"></div>
</div>
<svg class="abs" style="left:166px;top:208px" width="24" height="13"><polygon points="2,12 11.8,1.5 21.6,12" fill="#eaf0f6" stroke="#cbd6e2" stroke-width="1"/><rect x="0" y="11.5" width="24" height="2" fill="#eaf0f6"/></svg>
<div class="abs" style="left:175px;top:237.3px;width:1px;height:14px;background:#9fb2c6"></div>
<div class="t" style="left:176px;top:238.50px;font-size:12.4px;font-weight:400;color:#b3c3d4;transform:scaleX(0.9423);transform-origin:0 0">Search</div>
<svg class="abs" style="left:354px;top:237px" width="16" height="16"><circle cx="7" cy="7.6" r="4.3" fill="none" stroke="#0091ae" stroke-width="2"/><line x1="10.2" y1="10.8" x2="14" y2="14.6" stroke="#0091ae" stroke-width="2.2" stroke-linecap="round"/></svg>
<div class="abs" style="left:380px;top:269px;width:10px;height:171px;background:#f1f1f1"></div>
<div class="abs" style="left:381px;top:321.2px;width:8px;height:79.5px;background:#c1c1c1"></div>
<div style="position:absolute;left:382.5px;top:274px;width:0;height:0;border-left:2.5px solid transparent;border-right:2.5px solid transparent;border-bottom:3px solid #505050"></div>
<div style="position:absolute;left:382.5px;top:433px;width:0;height:0;border-left:2.5px solid transparent;border-right:2.5px solid transparent;border-top:3px solid #505050"></div>
<div class="t" style="left:172.7px;top:284.83px;font-size:10.36px;font-weight:700;color:#33475b;">Custom views</div>
<div class="abs" style="left:157px;top:304.6px;width:223px;height:49.3px;background:#e5f5f8"></div>
<div class="t" style="left:187.8px;top:315.02px;font-size:10.85px;font-weight:400;color:#586d84;">Big Data Blog Posts</div>
<div class="t" style="left:187.8px;top:335.07px;font-size:9.6px;font-weight:400;color:#7c98b6;">Tracking since 8/7/2018</div>
<div class="t" style="left:188.4px;top:364.43px;font-size:10.6px;font-weight:400;color:#586d84;">Traffic from U.S.</div>
<div class="t" style="left:187.8px;top:384.37px;font-size:9.6px;font-weight:400;color:#7c98b6;">Tracking since 8/9/2018</div>
<div class="abs" style="left:157px;top:404px;width:223px;height:36px;overflow:hidden">
<div class="t" style="left:31.4px;top:10.20px;font-size:10.87px;font-weight:400;color:#586d84;">Traffic From Specific Brand</div>
<div class="t" style="left:30.8px;top:30.27px;font-size:9.6px;font-weight:400;color:#7c98b6;">Tracking since 8/10/2018</div>
</div>
<div class="abs" style="left:157px;top:439.5px;width:233px;height:1.2px;background:#d9e1ea"></div>
<div class="t" style="left:172.4px;top:457.63px;font-size:10.6px;font-weight:700;color:#0091ae;">Manage views</div>
</body></html>
